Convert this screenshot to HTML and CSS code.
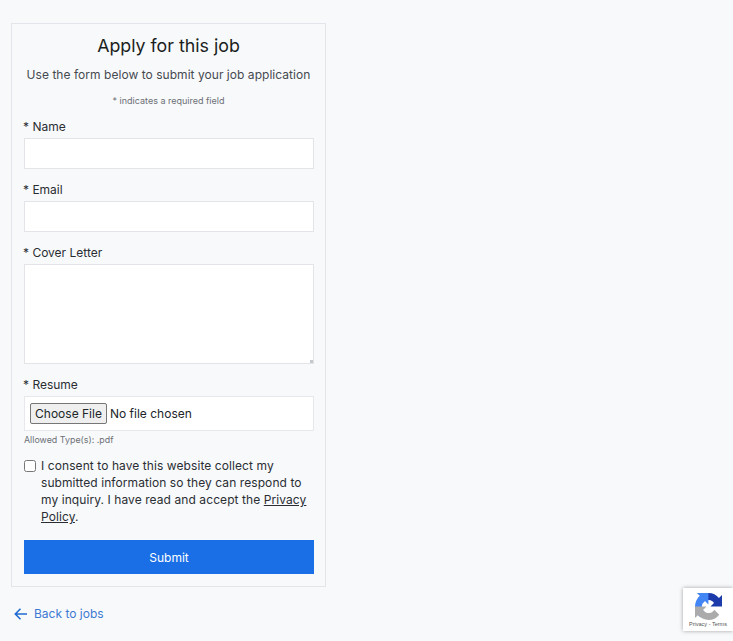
FILE: index.html
```html
<!DOCTYPE html>
<html lang="en">
<head>
<meta charset="utf-8">
<title>Apply for this job</title>
<link rel="stylesheet" href="styles.css">
</head>
<body>
<main class="page">
  <form class="card">
    <h1 class="title">Apply for this job</h1>
    <p class="subtitle">Use the form below to submit your job application</p>
    <p class="note">* indicates a required field</p>
    <div class="field">
      <label class="label" for="name">* Name</label>
      <input class="control" id="name" type="text">
    </div>
    <div class="field">
      <label class="label" for="email">* Email</label>
      <input class="control" id="email" type="email">
    </div>
    <div class="field">
      <label class="label" for="cover">* Cover Letter</label>
      <textarea class="control area" id="cover"></textarea>
    </div>
    <div class="field resume">
      <label class="label" for="resume">* Resume</label>
      <div class="filebox"><input class="file" id="resume" type="file"></div>
      <p class="allowed">Allowed Type(s): .pdf</p>
    </div>
    <label class="consent">
      <input class="check" type="checkbox">
      <span>I consent to have this website collect my submitted information so they can respond to my inquiry. I have read and accept the <a class="policy" href="#">Privacy Policy</a>.</span>
    </label>
    <button class="submit" type="button">Submit</button>
  </form>
  <a class="back" href="#">
    <svg class="arrow" viewBox="0 0 14 14" width="14" height="14" aria-hidden="true"><path d="M13 7H1.500M6.500 1.800L1.300 7l5.200 5.200" fill="none" stroke="currentColor" stroke-width="1.600"/></svg>
    <span>Back to jobs</span>
  </a>
</main>
<aside class="badge">
  <svg class="logo" viewBox="0 0 64 64" width="27" height="27" aria-hidden="true">
    <path fill="#1c3aa9" d="M64 31.955l-.033-1.370V4.687l-7.160 7.160C50.948 4.674 42.033.093 32.050.093c-10.400 0-19.622 4.960-25.458 12.640l11.736 11.860a15.550 15.550 0 0 1 4.754-5.334c2.050-1.600 4.952-2.906 8.968-2.906.485 0 .860.057 1.135.163 4.976.393 9.288 3.140 11.828 7.124l-8.307 8.307c10.522-.040 22.400-.066 27.295.005z"/>
    <path fill="#4285f4" d="M31.862.094l-1.370.033H4.594l7.160 7.160C4.580 13.139 0 22.054 0 32.037c0 10.400 4.960 19.622 12.640 25.458l11.860-11.736a15.550 15.550 0 0 1-5.334-4.754c-1.600-2.050-2.906-4.952-2.906-8.968 0-.485.057-.860.163-1.135.393-4.976 3.140-9.288 7.124-11.828l8.307 8.307c-.040-10.522-.066-22.400.005-27.295z"/>
    <path fill="#ababab" d="M.001 32.045l.033 1.370v25.898l7.160-7.160c5.858 7.173 14.773 11.754 24.756 11.754 10.400 0 19.622-4.960 25.458-12.640L45.672 39.410a15.550 15.550 0 0 1-4.754 5.334c-2.050 1.600-4.952 2.906-8.968 2.906-.485 0-.860-.057-1.135-.163-4.976-.393-9.288-3.140-11.828-7.124l8.307-8.307c-10.522.040-22.400.066-27.295-.005z"/>
  </svg>
  <span class="terms">Privacy - Terms</span>
</aside>
</body>
</html>
```
FILE: styles.css
```css
* { box-sizing: border-box; }
html, body { margin: 0; padding: 0; }
body {
  height: 641px;
  overflow: hidden;
  background: #f8f9fb;
  color: #212529;
  font-family: Inter, "Liberation Sans", sans-serif;
  position: relative;
}
.page { padding: 23px 0 0 11px; width: 326px; }
.card {
  width: 315px;
  height: 564px;
  border: 1px solid #e2e5e9;
  padding: 11px 12px 12px;
  display: flex;
  flex-direction: column;
}
.title {
  margin: 0;
  font-size: 17.800px;
  line-height: 22px;
  font-weight: 400;
  text-align: center;
  color: #1b1e21;
}
.subtitle {
  margin: 9px 0 0;
  font-size: 12px;
  letter-spacing: .04px;
  line-height: 18px;
  text-align: center;
  color: #454a50;
  white-space: nowrap;
}
.note {
  margin: 10px 0 0;
  font-size: 9px;
  line-height: 14px;
  text-align: center;
  color: #6c7076;
}
.field { display: flex; flex-direction: column; margin-top: 10px; }
.field + .field { margin-top: 12px; }
.label {
  font-size: 12px;
  line-height: 18px;
  margin-bottom: 2px;
  margin-left: -1px;
  color: #2a2e33;
}
.control {
  display: block;
  width: 290px;
  height: 31px;
  background: #fff;
  border: 1px solid #e2e4e8;
  border-radius: 0;
  outline: 0;
  margin: 0;
}
.area { height: 100px; resize: vertical; }
.area::-webkit-resizer {
  background: linear-gradient(#c4c7cb, #c4c7cb) no-repeat right bottom / 3px 3px;
}
.filebox {
  width: 290px;
  height: 35px;
  background: #fff;
  border: 1px solid #e6e8eb;
  padding: 0 5px;
  display: flex;
  align-items: center;
}
.file { font: 12px Inter, "Liberation Sans", sans-serif; color: #212529; width: 270px; }
.file::file-selector-button {
  font: inherit;
  height: 21px;
  width: 77px;
  padding: 0;
  margin-right: 3px;
  border: 1px solid #767676;
  border-radius: 2px;
  background: #efefef;
  color: #212529;
}
.allowed {
  margin: 2px 0 0;
  font-size: 8.900px;
  line-height: 14px;
  color: #6c7076;
}
.consent {
  display: flex;
  align-items: flex-start;
  margin-top: 10px;
  font-size: 12px;
  letter-spacing: .08px;
  line-height: 17px;
  color: #2a2e33;
}
.check {
  width: 12px;
  height: 12px;
  margin: 3px 5px 0 0;
  flex: none;
}
.policy { color: inherit; }
.submit {
  margin-top: 15px;
  width: 290px;
  height: 34px;
  background: #1a6fe6;
  color: #fff;
  border: 0;
  font: 12px Inter, "Liberation Sans", sans-serif;
}
.back {
  display: flex;
  align-items: center;
  gap: 6px;
  margin: 17px 0 0 3px;
  font-size: 12px;
  line-height: 20px;
  color: #3d79d2;
  text-decoration: none;
}
.arrow { color: #1f6bd0; flex: none; }
.badge {
  position: absolute;
  right: 0;
  top: 588px;
  width: 50px;
  height: 43px;
  background: #fff;
  box-shadow: 0 0 4px rgba(0,0,0,.35);
  display: flex;
  flex-direction: column;
  align-items: center;
  padding-top: 5px;
}
.terms { font: 5.500px/8px "Liberation Sans", sans-serif; color: #555; white-space: nowrap; }
```
